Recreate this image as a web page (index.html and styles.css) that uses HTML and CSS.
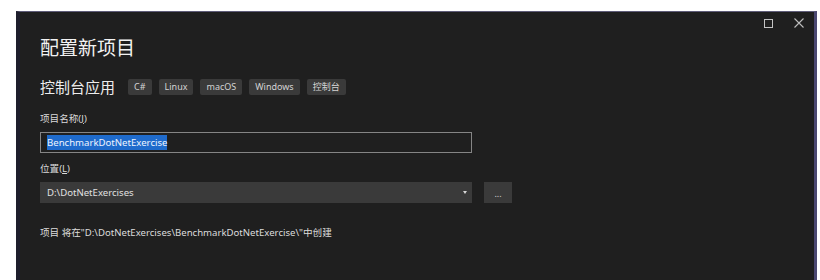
FILE: index.html
```html
<!DOCTYPE html>
<html lang="zh-CN">
<head>
  <meta charset="UTF-8">
  <meta name="viewport" content="width=device-width, initial-scale=1.0">
  <title>配置新项目</title>
  <link rel="stylesheet" href="styles.css">
</head>
<body>
  <div class="window">
    <div class="titlebar">
      <span class="ctl-max"></span>
      <svg class="ctl-close" width="10" height="10" viewBox="0 0 10 10">
        <path d="M0.5 0.5L9.5 9.5M9.5 0.5L0.5 9.5" stroke="#bdbdbd" stroke-width="1.1" fill="none"/>
      </svg>
    </div>

    <div class="content">
      <h1>配置新项目</h1>

      <div class="template-row">
        <span class="template-name">控制台应用</span>
        <span class="tag">C#</span>
        <span class="tag">Linux</span>
        <span class="tag">macOS</span>
        <span class="tag">Windows</span>
        <span class="tag">控制台</span>
      </div>

      <label class="field-label" for="projectName">项目名称(<u>J</u>)</label>
      <div class="textbox" id="projectName"><span class="selected">BenchmarkDotNetExercise</span></div>

      <label class="field-label label-location">位置(<u>L</u>)</label>
      <div class="location-row">
        <div class="combo">
          <span>D:\DotNetExercises</span>
          <span class="caret"></span>
        </div>
        <div class="browse">...</div>
      </div>

      <p class="note">项目 将在"D:\DotNetExercises\BenchmarkDotNetExercise\"中创建</p>
    </div>
  </div>
</body>
</html>
```

FILE: styles.css
```css
html, body {
  margin: 0;
  padding: 0;
  background-color: #ffffff;
  overflow: hidden;
  height: 280px;
}
body {
  font-family: "Noto Sans", "Noto Sans CJK SC", sans-serif;
  color: #dcdcdc;
}
.window {
  margin: 11px 0 0 16px;
  width: 801px;
  height: 280px;
  background-color: #1f1f1f;
  border-top: 1px solid #5e5c78;
  border-left: 4px solid #1e1e2c;
  border-right: 3px solid #4a4770;
  box-sizing: border-box;
}
.titlebar {
  display: flex;
  justify-content: flex-end;
  align-items: center;
  gap: 21px;
  padding: 6px 10px 0 0;
  height: 10px;
}
.ctl-max {
  width: 7px;
  height: 7px;
  border: 1px solid #c4c4c4;
}
.content {
  padding-left: 20px;
}
h1 {
  margin: 7px 0 0;
  font-size: 19px;
  line-height: 24px;
  font-weight: normal;
  color: #f2f2f2;
  font-family: "Noto Sans CJK SC", sans-serif;
}
.template-row {
  display: flex;
  align-items: center;
  gap: 7px;
  margin-top: 18px;
  height: 20px;
}
.template-name {
  font-family: "Noto Sans CJK SC", sans-serif;
  font-size: 15px;
  line-height: 20px;
  color: #ededed;
  margin-right: 6px;
}
.tag {
  background-color: #3a3a3a;
  color: #d4d4d4;
  font-size: 9px;
  line-height: 16px;
  height: 16px;
  padding: 0 6px;
  border-radius: 2px;
}
.field-label {
  display: block;
  margin-top: 15px;
  font-size: 9.6px;
  line-height: 14px;
  color: #dadada;
}
.field-label u {
  text-decoration: underline;
}
.label-location {
  margin-top: 9px;
}
.textbox {
  margin-top: 6px;
  width: 432px;
  height: 21px;
  box-sizing: border-box;
  border: 1px solid #858585;
  padding-left: 6px;
  font-size: 9.6px;
  line-height: 19px;
}
.selected {
  background-color: #1f6bcc;
  color: #eef4ff;
  padding: 1px 0;
}
.location-row {
  display: flex;
  gap: 12px;
  margin-top: 6px;
}
.combo {
  width: 432px;
  height: 21px;
  box-sizing: border-box;
  background-color: #3a3a3a;
  padding: 0 5px 0 7px;
  font-size: 9.6px;
  line-height: 21px;
  color: #e0e0e0;
  display: flex;
  justify-content: space-between;
  align-items: center;
}
.caret {
  width: 0;
  height: 0;
  border-left: 2.5px solid transparent;
  border-right: 2.5px solid transparent;
  border-top: 3px solid #d8d8d8;
}
.browse {
  width: 28px;
  height: 21px;
  background-color: #3a3a3a;
  color: #cfcfcf;
  font-size: 9px;
  line-height: 24px;
  text-align: center;
}
.note {
  margin: 23px 0 0;
  font-size: 9.6px;
  line-height: 14px;
  color: #dcdcdc;
}
```
